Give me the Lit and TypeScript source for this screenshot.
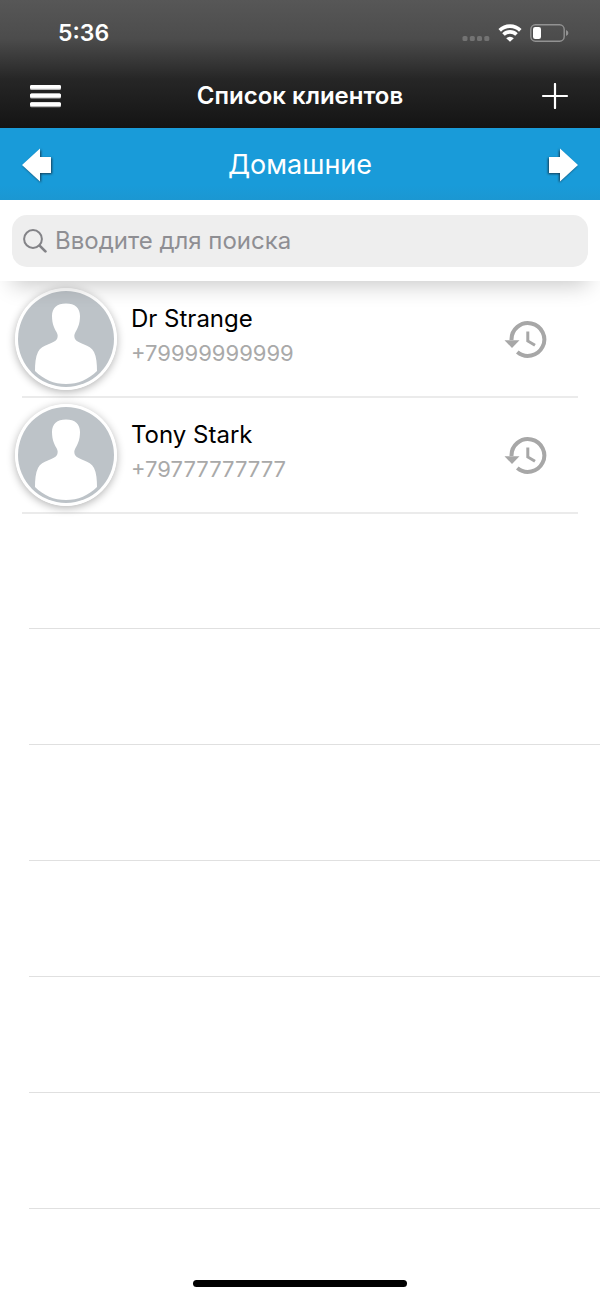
import { LitElement, html, css, svg } from "lit";
import { customElement, property, state } from "lit/decorators.js";

interface Client {
  name: string;
  phone: string;
}

const CLIENTS: Client[] = [
  { name: "Dr Strange", phone: "+79999999999" },
  { name: "Tony Stark", phone: "+79777777777" },
];

const EMPTY_ROWS = 6;

const arrowShape = svg`<path d="M1 18 L19 1.500 V10 H30 V26 H19 V34.500 Z" fill="#fff" />`;

@customElement("status-bar")
class StatusBar extends LitElement {
  static styles = css`
    :host {
      display: flex;
      align-items: center;
      justify-content: space-between;
      height: 66px;
      padding: 0 31px 0 58px;
    }
    .time {
      font-size: 23px;
      font-weight: 600;
      line-height: 28px;
    }
    .signals {
      display: flex;
      align-items: center;
      gap: 8px;
    }
    svg {
      display: block;
    }
  `;

  render() {
    return html`
      <span class="time">5:36</span>
      <div class="signals">
        <svg width="28" height="18" viewBox="0 0 28 18" fill="#737373" aria-hidden="true">
          <rect x="0.5" y="12" width="5" height="5" rx="1.6" />
          <rect x="7.8" y="12" width="5" height="5" rx="1.6" />
          <rect x="15" y="12" width="5" height="5" rx="1.6" />
          <rect x="22.3" y="12" width="5" height="5" rx="1.6" />
        </svg>
        <svg width="24" height="18" viewBox="0 0 24 18" aria-hidden="true">
          <g fill="none" stroke="#fff" stroke-width="3.6">
            <path d="M1.7 6.4 A14.6 14.6 0 0 1 22.3 6.4" />
            <path d="M5.5 10.600 A9.2 9.2 0 0 1 18.5 10.600" />
          </g>
          <path d="M12 17.8 L8.2 14.2 A5.4 5.4 0 0 1 15.8 14.2 Z" fill="#fff" />
        </svg>
        <svg width="39" height="18" viewBox="0 0 39 18" aria-hidden="true">
          <rect x="0.8" y="0.8" width="33.4" height="16.4" rx="4.6" fill="none" stroke="#929292" stroke-width="1.4" />
          <path d="M36 6 Q38.4 7 38.4 9 Q38.4 11 36 12 Z" fill="#929292" />
          <rect x="3" y="3" width="8" height="12" rx="2.2" fill="#fff" />
        </svg>
      </div>
    `;
  }
}

@customElement("client-row")
class ClientRow extends LitElement {
  @property({ attribute: false }) client!: Client;

  static styles = css`
    :host {
      display: block;
      padding: 0 22px;
    }
    .row {
      box-sizing: border-box;
      display: flex;
      align-items: center;
      height: 116px;
      border-bottom: 2px solid #ebebeb;
    }
    .avatar {
      flex: none;
      display: block;
      width: 102px;
      height: 102px;
      margin-left: -7px;
      border-radius: 50%;
      box-shadow: 0 2px 8px rgba(0, 0, 0, 0.3);
    }
    .info {
      flex: 1;
      min-width: 0;
      padding: 0 0 8px 14px;
    }
    .name,
    .phone {
      margin: 0;
      font-weight: 400;
    }
    .name {
      font-size: 24px;
      line-height: 36px;
      color: #000;
    }
    .phone {
      font-size: 22px;
      line-height: 32px;
      color: #a9a9a9;
    }
    .history {
      flex: none;
      margin: 0 30px 0 0;
      padding: 0;
      border: 0;
      background: none;
      cursor: pointer;
    }
    .history svg {
      display: block;
    }
  `;

  render() {
    return html`
      <div class="row">
        <svg class="avatar" viewBox="0 0 102 102" aria-hidden="true">
          <circle cx="51" cy="51" r="51" fill="#fff" />
          <circle cx="51" cy="51" r="48" fill="#bdc3c8" />
          <path
            fill="#fff"
            d="M51 15.5 C60 15.5 65 20 65 28 C65 36 62.5 40.500 60.500 44 C59 46.800 59 48.500 60 51 C63 56 75 56 79 64 C81.500 69 82 76 82 83 C73.500 91.500 63 96 51 96 C39 96 28.500 91.500 20 83 C20 76 20.500 69 23 64 C27 56 39 56 42 51 C43 48.500 43 46.800 41.500 44 C39.500 40.500 37 36 37 28 C37 20 42 15.500 51 15.500 Z"
          />
        </svg>
        <div class="info">
          <h2 class="name">${this.client.name}</h2>
          <p class="phone">${this.client.phone}</p>
        </div>
        <button class="history" aria-label="История: ${this.client.name}">
          <svg width="44" height="38" viewBox="0 0 44 38" aria-hidden="true">
            <path d="M7.5 20 A16.400 16.400 0 1 1 13.300 32" fill="none" stroke="#a7a7a7" stroke-width="4" />
            <path d="M0.500 20.200 H15.500 L8 28 Z" fill="#a7a7a7" />
            <path d="M23.800 11.500 V21 L31 25.300" fill="none" stroke="#a7a7a7" stroke-width="3" />
          </svg>
        </button>
      </div>
    `;
  }
}

@customElement("app-root")
class AppRoot extends LitElement {
  @state() private query = "";

  static styles = css`
    :host {
      display: flex;
      flex-direction: column;
      min-height: 100vh;
      background: #fff;
      color: #fff;
      font-family: Inter, "Liberation Sans", sans-serif;
    }
    button {
      padding: 0;
      border: 0;
      background: none;
      cursor: pointer;
    }
    svg {
      display: block;
    }
    .top {
      background: linear-gradient(#575757 0, #4c4c4c 30%, #262626 62%, #141414 100%);
    }
    .nav,
    .group {
      display: grid;
      grid-template-columns: 1fr auto 1fr;
      align-items: center;
    }
    .nav {
      height: 60px;
      padding: 0 30px 2px;
    }
    .nav > :last-child,
    .group > :last-child {
      justify-self: end;
    }
    .nav > :first-child,
    .group > :first-child {
      justify-self: start;
    }
    .title {
      margin: 0;
      font-size: 24px;
      font-weight: 600;
      line-height: 32px;
    }
    .group {
      height: 70px;
      padding: 2px 21px 0;
      background: linear-gradient(#199bd9 80%, #1b97d2);
    }
    .group-name {
      margin: 0;
      font-size: 27px;
      font-weight: 400;
      line-height: 36px;
    }
    .arrow {
      overflow: visible;
      filter: drop-shadow(1px 1px 1px rgba(20, 40, 55, 0.8));
    }
    .flip {
      transform: scaleX(-1);
    }
    .search {
      position: relative;
      z-index: 1;
      padding: 15px 12px 14px;
      background: #fff;
      box-shadow: 0 16px 22px -12px rgba(0, 0, 0, 0.22);
    }
    .field {
      display: flex;
      align-items: center;
      gap: 8px;
      height: 52px;
      padding: 0 11px;
      border-radius: 15px;
      background: #eee;
    }
    .field input {
      flex: 1;
      min-width: 0;
      padding: 0;
      border: 0;
      outline: 0;
      background: none;
      color: #222;
      font: 400 24px/32px Inter, "Liberation Sans", sans-serif;
    }
    .field input::placeholder {
      color: #8e8e93;
      opacity: 1;
    }
    .clients {
      margin: 0 0 -1px;
      padding: 1px 0 0;
      list-style: none;
    }
    .empty {
      box-sizing: border-box;
      height: 116px;
      margin-left: 29px;
      border-bottom: 1px solid #e0e0e0;
    }
    .home {
      width: 214px;
      height: 7px;
      margin: auto auto 12px;
      border-radius: 4px;
      background: #000;
    }
  `;

  private onInput(e: Event) {
    this.query = (e.target as HTMLInputElement).value;
  }

  render() {
    const needle = this.query.toLowerCase();
    const shown = CLIENTS.filter((c) => (c.name + c.phone).toLowerCase().includes(needle));
    return html`
      <header class="top">
        <status-bar></status-bar>
        <div class="nav">
          <button aria-label="Меню">
            <svg width="31" height="24" viewBox="0 0 31 24" aria-hidden="true">
              <g fill="#b5b5b5">
                <rect x="0" y="1" width="31" height="5" rx="1.500" />
                <rect x="0" y="9.600" width="31" height="5" rx="1.500" />
                <rect x="0" y="18.200" width="31" height="5" rx="1.500" />
              </g>
              <g fill="#fff">
                <rect x="0" y="1" width="31" height="3.800" rx="1.500" />
                <rect x="0" y="9.600" width="31" height="3.800" rx="1.500" />
                <rect x="0" y="18.200" width="31" height="3.800" rx="1.500" />
              </g>
            </svg>
          </button>
          <h1 class="title">Список клиентов</h1>
          <button aria-label="Добавить клиента">
            <svg width="30" height="26" viewBox="0 0 30 26" aria-hidden="true">
              <path d="M3 13 H27 M15 1 V25" fill="none" stroke="#fff" stroke-width="2.200" stroke-linecap="round" />
            </svg>
          </button>
        </div>
      </header>
      <div class="group">
        <button aria-label="Предыдущая группа">
          <svg class="arrow" width="33" height="36" viewBox="0 0 33 36" aria-hidden="true">${arrowShape}</svg>
        </button>
        <h2 class="group-name">Домашние</h2>
        <button aria-label="Следующая группа">
          <svg class="arrow flip" width="33" height="36" viewBox="0 0 33 36" aria-hidden="true">${arrowShape}</svg>
        </button>
      </div>
      <div class="search">
        <label class="field">
          <svg width="24" height="24" viewBox="0 0 24 24" fill="none" stroke="#838387" stroke-linecap="round" aria-hidden="true">
            <circle cx="10" cy="10" r="8.900" stroke-width="2" />
            <path d="M16.600 16.600 L22.400 22.400" stroke-width="2.700" />
          </svg>
          <input
            type="text"
            aria-label="Поиск клиента"
            placeholder="Вводите для поиска"
            .value=${this.query}
            @input=${this.onInput}
          />
        </label>
      </div>
      <ul class="clients">
        ${shown.map((c) => html`<li><client-row .client=${c}></client-row></li>`)}
      </ul>
      ${Array.from({ length: EMPTY_ROWS }, () => html`<div class="empty"></div>`)}
      <div class="home"></div>
    `;
  }
}
